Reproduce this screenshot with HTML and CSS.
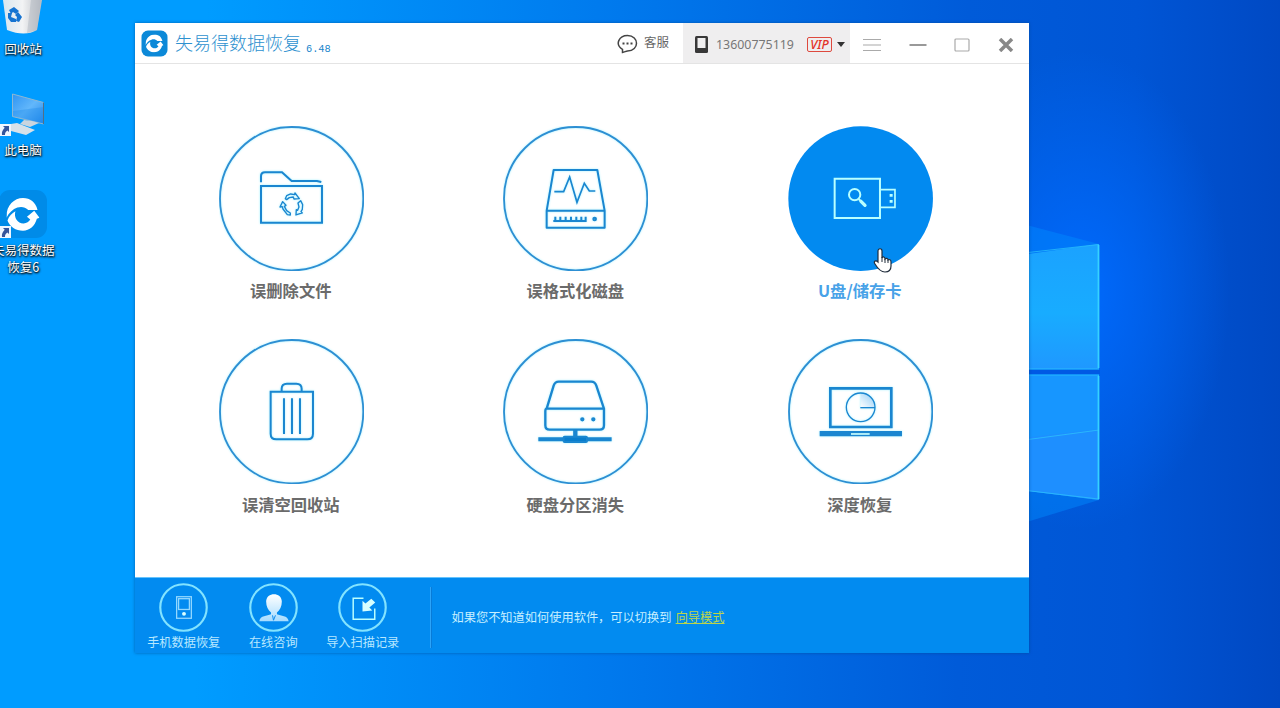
FILE: index.html
```html
<!DOCTYPE html>
<html lang="zh-CN">
<head>
<meta charset="utf-8">
<title>失易得数据恢复</title>
<link rel="stylesheet" href="styles.css">
</head>
<body>
<svg class="defs" width="0" height="0" aria-hidden="true">
  <defs>
    <linearGradient id="pane" x1="0" y1="0" x2="0" y2="1"><stop offset="0" stop-color="#1ba2ff"/><stop offset=".55" stop-color="#18acff"/><stop offset="1" stop-color="#1f98ff"/></linearGradient>
    <linearGradient id="bin" x1="0" y1="0" x2="1" y2="0"><stop offset="0" stop-color="#d9e6ef"/><stop offset=".5" stop-color="#f2f3f4"/><stop offset="1" stop-color="#b9bdc4"/></linearGradient>
    <linearGradient id="screen" x1="0" y1="0" x2="1" y2="1"><stop offset="0" stop-color="#2f94f2"/><stop offset=".5" stop-color="#62b7fb"/><stop offset="1" stop-color="#2389ec"/></linearGradient>
    <linearGradient id="person" x1="0" y1="0" x2="0" y2="1"><stop offset="0" stop-color="#fff"/><stop offset="1" stop-color="#a6dcff"/></linearGradient>
    <linearGradient id="slice" x1="0" y1="1" x2="1" y2="0"><stop offset="0" stop-color="#fff"/><stop offset="1" stop-color="#8dccf5"/></linearGradient>
    <symbol id="swirl" viewBox="0 0 100 100">
      <path d="M0 60C-2 24 22 0 50 0 72 0 88 12 94 36H66C57 27 44 25 33 29 19 34 7 45 0 60Z"/>
      <path d="M3 68C8 54 16 46 27 40 21 60 35 78 52 77c9-1 16-5 20-12l-10-8 22-18 16 21-8 3C86 85 70 99 50 99 28 99 10 87 3 68Z"/>
    </symbol>
    <symbol id="shortcut" viewBox="0 0 11 12"><path fill="#eef6ff" d="M0 0h11v12H0z"/><path fill="#34549c" d="M3 2h6v6L7.400 6.500C5.500 7.700 5 9 5 11H2C1.500 8 2.500 6 4.700 3.700z"/></symbol>
  </defs>
</svg>
<main class="desktop">
  <svg class="wallpaper" viewBox="0 0 1280 708">
    <path d="M1000 218l99 26v256l-99 30z" fill="#008cff" opacity=".45"/>
    <path d="M980 261l119-17v125H980z" fill="url(#pane)"/>
    <path d="M980 375h119v125l-119-15z" fill="#1796ff"/>
    <path d="M980 443l119-14v71l-119-15z" fill="#1e8fff"/>
    <path d="M980 446l119-16M980 258l118.500-13.500V368M980 369h119M980 375h119M1098.500 375v124L980 485" fill="none" stroke="#2ec8fb" stroke-width="1" opacity=".7"/>
    <path d="M1098.500 245v123M1098.500 376v123" stroke="#36d2ff" stroke-width="1.800"/>
    <path d="M1029 372h71" stroke="#0059e4" stroke-width="4"/>
  </svg>

  <div class="shortcut recycle">
    <svg width="46" height="35" viewBox="0 0 46 35"><path d="M3 0h39l-5 30q-12 7-30 0z" fill="url(#bin)"/><path d="M31 0l-4 33 10-3 4-30z" fill="#aeb4bd" opacity=".45"/><g fill="#1674d1"><path d="M9 10l5-3 5 4-3 3-3-2-2 2z"/><path d="M18 12l4 5-3 5-3-1 1-4-2-2z"/><path d="M8 13l4 0-1 4 5 2v3h-5l-3-4z"/></g></svg>
    <span>回收站</span>
  </div>
  <div class="shortcut computer">
    <svg width="46" height="46" viewBox="0 0 46 46"><path d="M12.500 4l31 8.500V34l-31-7.500z" fill="url(#screen)" stroke="#8cb7d3"/><path d="M13 21L44 17v16l-31-7z" fill="#1484e9" opacity=".3"/><path d="M43.500 12.500V34" stroke="#526f86"/><path d="M24 30l-4 4 10 3 9-4-7-2z" fill="#cad5df"/><path d="M11 34l6-1 18 7-9 5-15-4z" fill="#d7e1e9"/><use href="#shortcut" y="34" width="11" height="12"/></svg>
    <span>此电脑</span>
  </div>
  <div class="shortcut recovery">
    <svg width="47" height="50" viewBox="0 0 47 50"><rect x="-1" width="48" height="48" rx="11" fill="#008be8"/><use href="#swirl" x="6.500" y="8" width="33" height="33" fill="#fff"/><use href="#shortcut" y="36" width="11" height="12"/></svg>
    <span>失易得数据<br>恢复6</span>
  </div>

  <section class="window">
    <header class="titlebar">
      <svg class="logo" width="27" height="27" viewBox="0 0 27 27"><rect x=".5" y=".5" width="26" height="26" rx="6.500" fill="#0c89d8"/><use href="#swirl" x="4.500" y="4.500" width="18" height="18" fill="#fff"/></svg>
      <h1>失易得数据恢复</h1><span class="version">6.48</span>
      <div class="service"><svg width="21" height="20" viewBox="0 0 21 20" fill="none" stroke="#444" stroke-width="1.500"><path d="M5.500 18.500v-3.200C-2.500 10.500 2 1.500 10.500 1.500c12 0 12 15.500 0 15.500-1.500 0-3 1.300-5 1.500z"/><path d="M5.500 9.500h2M9.500 9.500h2M13.500 9.500h2" stroke-width="2"/></svg><span>客服</span></div>
      <div class="account"><svg width="13" height="17" viewBox="0 0 13 17"><rect width="13" height="17" rx="1.500" fill="#383838"/><path fill="#f0eff0" d="M2.500 2h8v10h-8z"/></svg><span class="phone">13600775119</span><span class="vip">VIP</span><i class="caret"></i></div>
      <div class="controls">
        <svg width="18" height="14" viewBox="0 0 18 14" stroke="#aaa" stroke-width="1.200"><path d="M0 1.500h18M0 7h18M0 12.500h18"/></svg>
        <svg width="18" height="14" viewBox="0 0 18 14" stroke="#999" stroke-width="2"><path d="M.5 7h17"/></svg>
        <svg width="16" height="14" viewBox="0 0 16 14" fill="none" stroke="#aaa" stroke-width="1.200"><rect x="1" y="1" width="14" height="12" rx="1"/></svg>
        <svg width="16" height="14" viewBox="0 0 16 14" stroke="#888" stroke-width="3.500"><path d="M2 1l12 12M14 1L2 13"/></svg>
      </div>
    </header>

    <div class="choices">
      <div class="choice"><svg viewBox="27 16 436 436"><circle class="ring" cx="245" cy="234" r="215"/><g class="draw"><path d="M153 185v-18q0-12 12-12h51l29 26h76l13 3M153 196h183v110H153z"/><g stroke-width="4" stroke-linejoin="round"><path d="M226 234l4-9 12-5 12 2 1-5 13 17-16 1-2-6-12 2-8 6z"/><path d="M218 243l10 11-5 3 7 13 11 7v6l-9-1-13-17-2-7-7 1z"/><path d="M272 240l6 12-1 14-4 7 4 4-19 6 1-16 4 2 4-10-3-12z"/></g></g></svg><b>误删除文件</b></div>
      <div class="choice"><svg viewBox="41 16 436 436"><circle class="ring" cx="259" cy="234" r="215"/><g class="draw"><path d="M193 148h131l22 122v51H172v-51zM172 270h174" stroke-linejoin="round"/><path d="M195 213h28l18-44 22 76 22-57 15 23h18" stroke-width="5"/><path d="M192 301h100M198 288v15M213 288v15M229 288v15M245 288v15M261 288v15M276 288v15M289 288v15" stroke-width="6"/><circle cx="316" cy="295" r="4"/></g></svg><b>误格式化磁盘</b></div>
      <div class="choice active"><svg viewBox="39 16 436 436"><circle cx="257" cy="234" r="217" fill="#028af0"/><g fill="none" stroke="#b8ffff" stroke-width="6"><path d="M179 174h136v118H179z"/><path d="M316 207h44v53h-44" stroke-width="5"/><circle cx="239" cy="222" r="17"/><path d="M251 235l8 8" /><path d="M258 242l12 12" stroke-width="10" stroke-linecap="round"/></g><path d="M344 220h9v8h-9zM344 238h9v8h-9z" fill="#b8ffff"/></svg><b>U盘/储存卡</b></div>
      <div class="choice"><svg viewBox="27 27 436 436"><circle class="ring" cx="245" cy="245" r="215"/><g class="draw"><path d="M182 185h127v126q0 17-17 17h-93q-17 0-17-17zM215 184v-8q0-15 16-15h28q16 0 16 15v8M222 205v107M246 205v107M270 205v107"/></g></svg><b>误清空回收站</b></div>
      <div class="choice"><svg viewBox="41 27 436 436"><circle class="ring" cx="259" cy="245" r="215"/><g class="draw"><path d="M172 236l21-69q4-12 15-12h98q11 0 15 12l23 69v50q0 13-13 13H181q-13 0-13-13v-42q0-8 4-8zM169 236h175" stroke-width="7"/><path d="M258 299v29" stroke-width="13"/><path d="M147 328h220" stroke-width="12"/><rect x="223" y="320" width="70" height="16" rx="3" stroke-width="6" fill="#087dcc"/><circle cx="279" cy="268" r="3.500"/><circle cx="312" cy="268" r="3.500"/></g></svg><b>硬盘分区消失</b></div>
      <div class="choice"><svg viewBox="39 27 436 436"><circle class="ring" cx="257" cy="245" r="215"/><g class="draw"><path d="M166 175h183v116H166z" stroke-width="8"/><path d="M257 233v-43a43 43 0 0 1 43 43z" fill="url(#slice)" stroke="none"/><circle cx="257" cy="232" r="43" stroke-width="4"/><path d="M256 233h44" stroke-width="4"/><path d="M134 311h247" stroke-width="16"/></g><path d="M228 312h56" stroke="#c9ffff" stroke-width="5"/></svg><b>深度恢复</b></div>
    </div>

    <footer class="footer">
      <div class="tool"><svg viewBox="0 0 50 50"><circle class="tool-ring" cx="25" cy="25" r="23.700"/><g fill="none" stroke="#93d8ff" stroke-width="1.300"><rect x="18" y="14" width="15" height="22"/><rect x="20" y="16" width="11" height="11"/></g><circle cx="25.500" cy="31.500" r="2" fill="#d9ffff"/></svg><span>手机数据恢复</span></div>
      <div class="tool"><svg viewBox="0 0 50 50"><circle class="tool-ring" cx="25" cy="25" r="23.700"/><path fill="url(#person)" d="M17.500 19c0-10 16-10 16 0 0 5-2 9-5 11v2c4 2 11 1 12 7h-30c1-6 8-5 12-7v-2c-3-2-5-6-5-11z"/><path d="M24 33l1 5 2-5" fill="none" stroke="#0c8aed"/></svg><span>在线咨询</span></div>
      <div class="tool"><svg viewBox="0 0 50 50"><circle class="tool-ring" cx="25" cy="25" r="23.700"/><path d="M26 15.500H15.500V37h22V26" fill="none" stroke="#baffff" stroke-width="1.500"/><path d="M25 18l3 3 6-5 4 4-6 5 3 3-10 1z" fill="#d6ffff"/></svg><span>导入扫描记录</span></div>
      <p>如果您不知道如何使用软件，可以切换到 <a>向导模式</a></p>
    </footer>
  </section>
  <svg class="cursor" width="20" height="25" viewBox="0 0 20 25"><path d="M6 14V3c0-3 4-3 4 0v7c1-2 3-1 3 1 1-1 3-1 3 1 2-1 3 0 3 2v4c0 4-2 6-6 6-4 0-7-3-10-8-2-3 1-4 3-2z" fill="#fff" stroke="#222e3d" stroke-width="1.200"/><path d="M10 9v5M13 11v4M16 12v3" stroke="#222e3d"/></svg>
</main>
</body>
</html>
```
FILE: styles.css
```css
* { box-sizing: border-box; }
body { margin: 0; font-family: "Noto Sans", "Noto Sans CJK SC", sans-serif; }
svg { display: block; flex: none; }
.defs { position: absolute; }
.desktop {
  position: relative;
  width: 1280px;
  height: 708px;
  overflow: hidden;
  background:
    radial-gradient(ellipse 150px 240px at 1080px 290px, rgba(0, 107, 255, .95), rgba(0, 100, 255, 0)),
    linear-gradient(91deg, #009cff 0, #009cff 16%, #0079ed 48%, #005bd9 75%, #0055d5 88%, #0048c2 100%);
}
.wallpaper { position: absolute; inset: 0; }
.shortcut {
  position: absolute;
  display: flex;
  flex-direction: column;
  align-items: center;
  font-family: "Noto Sans CJK SC", sans-serif;
  font-size: 12.500px;
  line-height: 17px;
  text-align: center;
  color: #fff;
  white-space: nowrap;
  text-shadow: 0 1px 2px #000, 1px 1px 2px #123;
}
.recycle { left: 0; top: 0; gap: 5px; }
.computer { left: 0; top: 90px; gap: 5px; }
.recovery { left: -8px; top: 190px; gap: 1px; }
.window {
  position: absolute;
  left: 135px;
  top: 23px;
  width: 894px;
  height: 630px;
  display: flex;
  flex-direction: column;
  background: #fff;
  box-shadow: 0 0 3px rgba(0, 65, 135, .65);
}
.titlebar {
  height: 41px;
  display: flex;
  align-items: center;
  border-bottom: 1px solid #e4e4e4;
  padding-left: 6px;
}
h1 {
  margin: 0 0 2px 7px;
  font-family: "Noto Sans CJK SC", sans-serif;
  font-size: 18px;
  font-weight: 300;
  line-height: 26px;
  color: #2d91cf;
}
.version {
  margin: 11px 0 0 5px;
  font: 10.300px/12px "Liberation Mono", monospace;
  color: #1684cb;
}
.service { margin-left: auto; width: 66px; display: flex; align-items: center; gap: 6px; padding-top: 1px; font-size: 12.500px; line-height: 18px; color: #666; }
.service span { padding-bottom: 2px; }
.account { height: 40px; width: 167px; background: #efeeef; display: flex; align-items: center; padding: 2px 0 0 12px; }
.phone { margin-left: 8px; padding-top: 1px; width: 79px; font-size: 12.400px; color: #777; }
.vip { margin-left: 12px; width: 25px; height: 15px; border: 1px solid #de493e; border-radius: 2px; color: #e33227; text-align: center; font: italic 500 12.500px/13px "Noto Sans", sans-serif; }
.caret { margin-left: 5px; border: 4.500px solid transparent; border-top: 5px solid #333; border-bottom: 0; }
.controls { width: 179px; display: flex; justify-content: space-between; align-items: center; padding: 3px 15px 0 13px; }
.choices { height: 513px; padding: 61.500px 26.500px 0 14px; display: grid; grid-template-columns: repeat(3, 284.500px); grid-auto-rows: 213.500px; }
.choice { display: flex; flex-direction: column; align-items: center; }
.choice svg { width: 145.300px; height: 145.300px; }
.choice b { margin: 7.500px 1px 0 0; font-family: "Noto Sans CJK SC", sans-serif; font-size: 16.300px; line-height: 24px; font-weight: 700; color: #6b6b6b; }
.choice.active b { color: #48a2e8; }
.ring { fill: none; stroke: #2d8fd3; stroke-width: 5.500; }
.ring, .draw { filter: drop-shadow(0 0 3px #a7f2ff); }
.draw { fill: none; stroke: #1a86d0; stroke-width: 6; }
.footer { height: 76px; background: #028bf0; display: flex; padding: 5px 0 0 4px; color: #c7efff; border-top: 1px solid #65c3fc; }
.tool { width: 89.500px; display: flex; flex-direction: column; align-items: center; gap: 2px; font-size: 12.200px; line-height: 18px; color: #b8e8ff; }
.tool svg { width: 49px; height: 49px; }
.tool-ring { fill: none; stroke: #82e3ff; stroke-width: 2.200; }
.footer p { height: 61px; margin: 4px 0 0 23px; padding-left: 20px; border-left: 1px solid #087bd7; box-shadow: -1px 0 #2ba4fa; font-size: 12.230px; line-height: 62px; }
.footer a { margin-left: 1px; color: #bbd44b; text-decoration: underline; }
.cursor { position: absolute; left: 872px; top: 248px; }
```
